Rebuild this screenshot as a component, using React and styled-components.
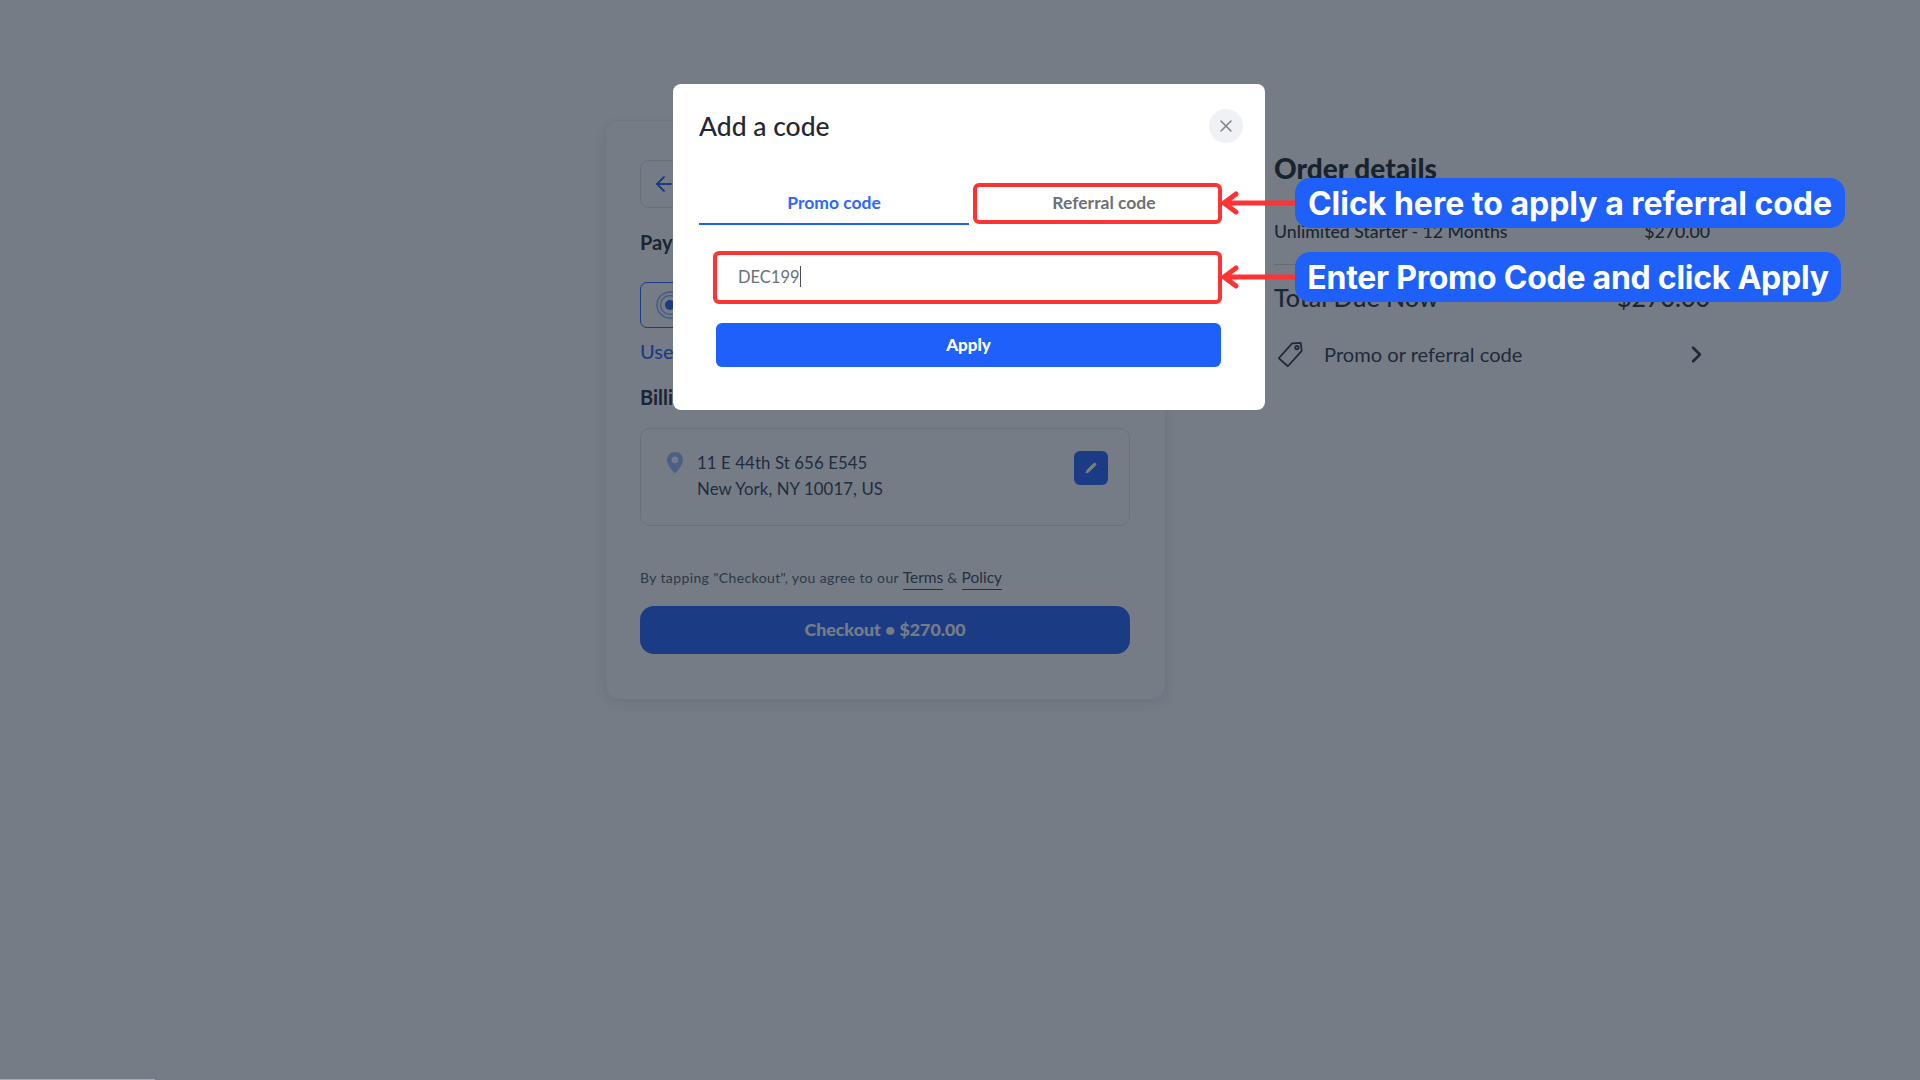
import React from "react";
import styled, { createGlobalStyle } from "styled-components";
import { X, ArrowLeft, ChevronRight, Pencil } from "lucide-react";

const Global = createGlobalStyle`
  html, body { margin: 0; padding: 0; background: #fff; }
  * { box-sizing: border-box; }
  body { font-family: Lato, "Open Sans", sans-serif; overflow: hidden; }
`;

const Page = styled.div`
  position: relative;
  width: 1920px;
  height: 1080px;
  overflow: hidden;
  display: flex;
  align-items: flex-start;
  gap: 108px;
  padding: 120px 0 0 605px;
  background: #fff;
`;

const CheckoutCard = styled.section`
  width: 561px;
  padding: 39px 35px 45px 34px;
  background: #fff;
  border: 1px solid #eef0f3;
  border-radius: 14px;
  box-shadow: 0 4px 14px rgba(30, 40, 60, 0.1);
  display: flex;
  flex-direction: column;
`;

const BackButton = styled.button`
  width: 48px;
  height: 48px;
  padding: 0;
  background: #fff;
  border: 1px solid #dfe2e7;
  border-radius: 8px;
  color: #1f5ffa;
  display: flex;
  align-items: center;
  justify-content: center;
`;

const SectionTitle = styled.h2`
  margin: ${(p) => p.$top}px 0 0;
  font-size: 20px;
  line-height: 28px;
  font-weight: 700;
  color: #1f2430;
`;

const MethodBox = styled.div`
  margin-top: 26px;
  height: 46px;
  border: 1.5px solid #1f5ffa;
  border-radius: 7px;
  padding-left: 14px;
  display: flex;
  align-items: center;
`;

const UseLink = styled.a`
  margin-top: 11px;
  font-size: 20px;
  line-height: 24px;
  font-weight: 500;
  color: #1f5ffa;
`;

const AddressCard = styled.div`
  margin-top: 17px;
  height: 98px;
  border: 1px solid #dfe2e7;
  border-radius: 10px;
  padding: 21px 21px 0 24px;
  display: flex;
  align-items: flex-start;
`;

const PinIcon = styled.svg`
  width: 20px;
  height: 24px;
  margin: 1px 12px 0 0;
  flex: none;
`;

const AddressText = styled.div`
  flex: 1;
  font-size: 16.8px;
  line-height: 26px;
  color: #30394c;
  letter-spacing: 0.1px;
`;

const EditButton = styled.div`
  width: 34px;
  height: 34px;
  margin-top: 1px;
  border-radius: 6px;
  background: #1f5ffa;
  color: #fff;
  display: flex;
  align-items: center;
  justify-content: center;
`;

const Terms = styled.p`
  margin: 41px 0 0;
  font-size: 14px;
  line-height: 20px;
  color: #4f5563;
  letter-spacing: 0.38px;
  white-space: nowrap;
`;

const TermsLink = styled.a`
  font-size: 15.5px;
  color: #3a4150;
  letter-spacing: 0;
  padding-bottom: 3px;
  border-bottom: 1px solid #3a4150;
`;

const CheckoutButton = styled.button`
  margin-top: 18px;
  height: 48px;
  border: none;
  border-radius: 14px;
  background: #1f5ffa;
  color: #fff;
  font-family: inherit;
  font-size: 17.8px;
  font-weight: 900;
  padding: 0 0 2px;
`;

const OrderColumn = styled.aside`
  width: 436px;
  padding-top: 31px;
  display: flex;
  flex-direction: column;
`;

const OrderTitle = styled.h1`
  margin: 0;
  font-size: 28px;
  line-height: 34px;
  font-weight: 900;
  color: #1b1f27;
`;

const OrderRow = styled.div`
  margin-top: 34px;
  padding-bottom: 20px;
  border-bottom: 1px solid #d5d8dd;
  display: flex;
  justify-content: space-between;
  font-size: 17.7px;
  line-height: 25px;
  font-weight: 500;
  color: #232833;
`;

const TotalRow = styled.div`
  margin-top: 16px;
  display: flex;
  justify-content: space-between;
  font-size: 25px;
  line-height: 32px;
  font-weight: 500;
  color: #232833;
`;

const PromoRow = styled.div`
  margin-top: 25px;
  height: 32px;
  display: flex;
  align-items: center;
  font-size: 20.1px;
  color: #2c3342;
`;

const PromoLabel = styled.span`
  flex: 1;
  margin-left: 18px;
`;

const Overlay = styled.div`
  position: absolute;
  inset: 0;
  background: rgba(25, 37, 53, 0.6);
`;

const BottomStrip = styled.div`
  position: absolute;
  left: 0;
  bottom: 0;
  width: 155px;
  height: 1px;
  background: #a9adb3;
`;

const Modal = styled.div`
  position: absolute;
  left: 673px;
  top: 84px;
  width: 592px;
  height: 326px;
  background: #fff;
  border-radius: 8px;
  padding: 0 26px 0 26px;
`;

const ModalHeader = styled.header`
  height: 99px;
  display: flex;
  align-items: center;
  justify-content: space-between;
  padding: 0 0 16px;
  margin-right: -4px;
`;

const ModalTitle = styled.h3`
  margin: 0;
  font-size: 26.5px;
  font-weight: 500;
  color: #232833;
`;

const CloseButton = styled.button`
  width: 34px;
  height: 34px;
  padding: 0;
  border: none;
  border-radius: 50%;
  background: #f0f1f4;
  color: #7d828b;
  display: flex;
  align-items: center;
  justify-content: center;
`;

const Tabs = styled.div`
  display: grid;
  grid-template-columns: 270px 270px;
`;

const Tab = styled.button`
  height: 42px;
  padding: 0 0 1px;
  background: none;
  border: none;
  border-bottom: 2px solid ${(p) => (p.$active ? "#1f5ffa" : "transparent")};
  font-family: inherit;
  font-size: 17.5px;
  font-weight: 700;
  color: ${(p) => (p.$active ? "#2a68ff" : "#6b7079")};
`;

const Form = styled.form`
  margin: 28px 17px 0;
  width: 505px;
  display: flex;
  flex-direction: column;
  gap: 23px;
`;

const CodeField = styled.div`
  height: 47px;
  padding-left: 22px;
  display: flex;
  align-items: center;
  font-size: 16.5px;
  color: #6b7079;
`;

const Caret = styled.span`
  width: 1px;
  height: 21px;
  background: #4a4f58;
`;

const ApplyButton = styled.button`
  height: 44px;
  padding: 0 0 1px;
  border: none;
  border-radius: 6px;
  background: #1f5ffa;
  color: #fff;
  font-family: inherit;
  font-size: 17px;
  font-weight: 900;
`;

const RedBox = styled.div`
  position: absolute;
  left: ${(p) => p.$x}px;
  top: ${(p) => p.$y}px;
  width: ${(p) => p.$w}px;
  height: ${(p) => p.$h}px;
  border: 4px solid #ff3333;
  border-radius: 6px;
`;

const Pointer = styled.svg`
  position: absolute;
  left: 1221px;
  top: ${(p) => p.$y}px;
  width: 76px;
  height: 24px;
`;

const Callout = styled.div`
  position: absolute;
  left: 1295px;
  top: ${(p) => p.$y}px;
  width: ${(p) => p.$w}px;
  height: 50px;
  padding-top: 1px;
  border-radius: 15px;
  background: #1f5ffa;
  color: #fff;
  font-family: Inter, sans-serif;
  font-size: 32px;
  font-weight: 700;
  letter-spacing: ${(p) => p.$track}px;
  display: flex;
  align-items: center;
  justify-content: center;
  white-space: nowrap;
`;

function Arrow({ y }) {
  return (
    <Pointer $y={y} viewBox="0 0 76 24">
      <path d="M3 12H76M15 3L3 12L15 21" fill="none" stroke="#ff3333" strokeWidth="5" strokeLinejoin="round" strokeLinecap="round" />
    </Pointer>
  );
}

export default function App() {
  return (
    <Page>
      <Global />
      <CheckoutCard>
        <BackButton aria-label="Back">
          <ArrowLeft size={24} strokeWidth={1.8} />
        </BackButton>
        <SectionTitle $top={20}>Payment method</SectionTitle>
        <MethodBox>
          <svg width="30" height="30" viewBox="0 0 30 30">
            <circle cx="15" cy="15" r="13" fill="none" stroke="#1f5ffa" strokeOpacity=".55" strokeWidth="1.4" />
            <circle cx="15" cy="15" r="9.5" fill="none" stroke="#1f5ffa" strokeOpacity=".55" strokeWidth="1.4" />
            <circle cx="15" cy="15" r="5" fill="#1f5ffa" />
          </svg>
        </MethodBox>
        <UseLink>Use another card</UseLink>
        <SectionTitle $top={20}>Billing address</SectionTitle>
        <AddressCard>
          <PinIcon viewBox="0 0 20 24">
            <path fillRule="evenodd" d="M10 1C5.2 1 2 4.500 2 8.800C2 14 7.500 20 10 22.500C12.500 20 18 14 18 8.800C18 4.500 14.800 1 10 1ZM10 5.500A3.300 3.300 0 1 1 10 12.100A3.300 3.300 0 1 1 10 5.500Z" fill="#1f5ffa" fillOpacity=".45" />
          </PinIcon>
          <AddressText>
            11 E 44th St 656 E545
            <br />
            New York, NY 10017, US
          </AddressText>
          <EditButton>
            <Pencil size={12} fill="currentColor" strokeWidth={1.5} />
          </EditButton>
        </AddressCard>
        <Terms>
          By tapping "Checkout", you agree to our <TermsLink>Terms</TermsLink> &amp; <TermsLink>Policy</TermsLink>
        </Terms>
        <CheckoutButton>Checkout • $270.00</CheckoutButton>
      </CheckoutCard>

      <OrderColumn>
        <OrderTitle>Order details</OrderTitle>
        <OrderRow>
          <span>Unlimited Starter - 12 Months</span>
          <span>$270.00</span>
        </OrderRow>
        <TotalRow>
          <span>Total Due Now</span>
          <span>$270.00</span>
        </TotalRow>
        <PromoRow>
          <svg width="32" height="32" viewBox="0 0 30 30" fill="none" stroke="#2c3342" strokeWidth="1.7" strokeLinejoin="round">
            <path d="M17 5L25 4.500L26 12L13 26.500L4.500 19Z" />
            <circle cx="21.500" cy="9" r="1.600" />
          </svg>
          <PromoLabel>Promo or referral code</PromoLabel>
          <ChevronRight size={27} strokeWidth={2.4} />
        </PromoRow>
      </OrderColumn>

      <Overlay />
      <BottomStrip />

      <Modal>
        <ModalHeader>
          <ModalTitle>Add a code</ModalTitle>
          <CloseButton aria-label="Close">
            <X size={20} strokeWidth={1.8} />
          </CloseButton>
        </ModalHeader>
        <Tabs>
          <Tab $active>Promo code</Tab>
          <Tab>Referral code</Tab>
        </Tabs>
        <Form>
          <CodeField>
            DEC199
            <Caret />
          </CodeField>
          <ApplyButton type="button">Apply</ApplyButton>
        </Form>
      </Modal>

      <RedBox $x={973} $y={183} $w={249} $h={41} />
      <RedBox $x={713} $y={251} $w={509} $h={53} />
      <Arrow y={191} />
      <Arrow y={265} />
      <Callout $y={178} $w={550} $track={0}>Click here to apply a referral code</Callout>
      <Callout $y={252} $w={546} $track={-0.25}>Enter Promo Code and click Apply</Callout>
    </Page>
  );
}
